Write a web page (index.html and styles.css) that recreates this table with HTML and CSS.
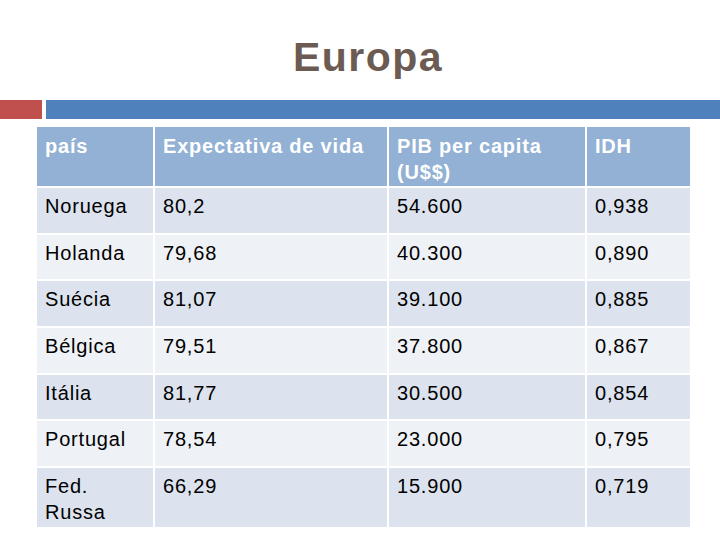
FILE: index.html
```html
<!DOCTYPE html>
<html lang="pt">
<head>
<meta charset="utf-8">
<title>Europa</title>
<link rel="stylesheet" href="styles.css">
</head>
<body>
<div class="slide">
  <h1 class="title">Europa</h1>
  <div class="rule">
    <div class="rule-red"></div>
    <div class="rule-blue"></div>
  </div>
  <table class="data">
    <colgroup>
      <col class="c1"><col class="c2"><col class="c3"><col class="c4">
    </colgroup>
    <thead>
      <tr class="head">
        <th>país</th>
        <th>Expectativa de vida</th>
        <th>PIB per capita (U$$)</th>
        <th>IDH</th>
      </tr>
    </thead>
    <tbody>
      <tr class="band1"><td>Noruega</td><td>80,2</td><td>54.600</td><td>0,938</td></tr>
      <tr class="band2"><td>Holanda</td><td>79,68</td><td>40.300</td><td>0,890</td></tr>
      <tr class="band1"><td>Suécia</td><td>81,07</td><td>39.100</td><td>0,885</td></tr>
      <tr class="band2"><td>Bélgica</td><td>79,51</td><td>37.800</td><td>0,867</td></tr>
      <tr class="band1"><td>Itália</td><td>81,77</td><td>30.500</td><td>0,854</td></tr>
      <tr class="band2"><td>Portugal</td><td>78,54</td><td>23.000</td><td>0,795</td></tr>
      <tr class="band1 tall"><td>Fed. Russa</td><td>66,29</td><td>15.900</td><td>0,719</td></tr>
    </tbody>
  </table>
</div>
</body>
</html>
```

FILE: styles.css
```css
* { box-sizing: border-box; }
html, body {
  margin: 0;
  padding: 0;
  background: #ffffff;
}
.slide {
  width: 720px;
  height: 540px;
  overflow: hidden;
  font-family: "Liberation Sans", Arial, sans-serif;
}
.title {
  margin: 0;
  padding-top: 33px;
  height: 100px;
  text-align: center;
  font-weight: bold;
  font-size: 41px;
  line-height: 48px;
  letter-spacing: 1.5px;
  color: #6c5b53;
  padding-left: 16px;
}
.rule {
  display: flex;
  height: 19px;
  gap: 4px;
}
.rule-red {
  width: 42px;
  background: #c0504d;
}
.rule-blue {
  flex: 1;
  background: #4f81bd;
}
.data {
  margin-top: 6px;
  margin-left: 35px;
  width: 657px;
  table-layout: fixed;
  border-collapse: separate;
  border-spacing: 2px;
  font-size: 20px;
  line-height: 26px;
  letter-spacing: 0.8px;
}
.c1 { width: 116px; }
.c2 { width: 232px; }
.c3 { width: 196px; }
.c4 { width: 103px; }
.data th, .data td {
  padding: 5px 6px 0 8px;
  vertical-align: top;
  text-align: left;
}
.data th {
  color: #ffffff;
  font-weight: bold;
  background: #92b1d4;
  padding-top: 6px;
}
.data td {
  color: #000000;
}
.head { height: 59px; }
.band1, .band2 { height: 44.67px; }
.band1 td { background: #dce3ee; }
.band2 td { background: #eef1f6; }
.data tr.tall { height: 59px; }
```
